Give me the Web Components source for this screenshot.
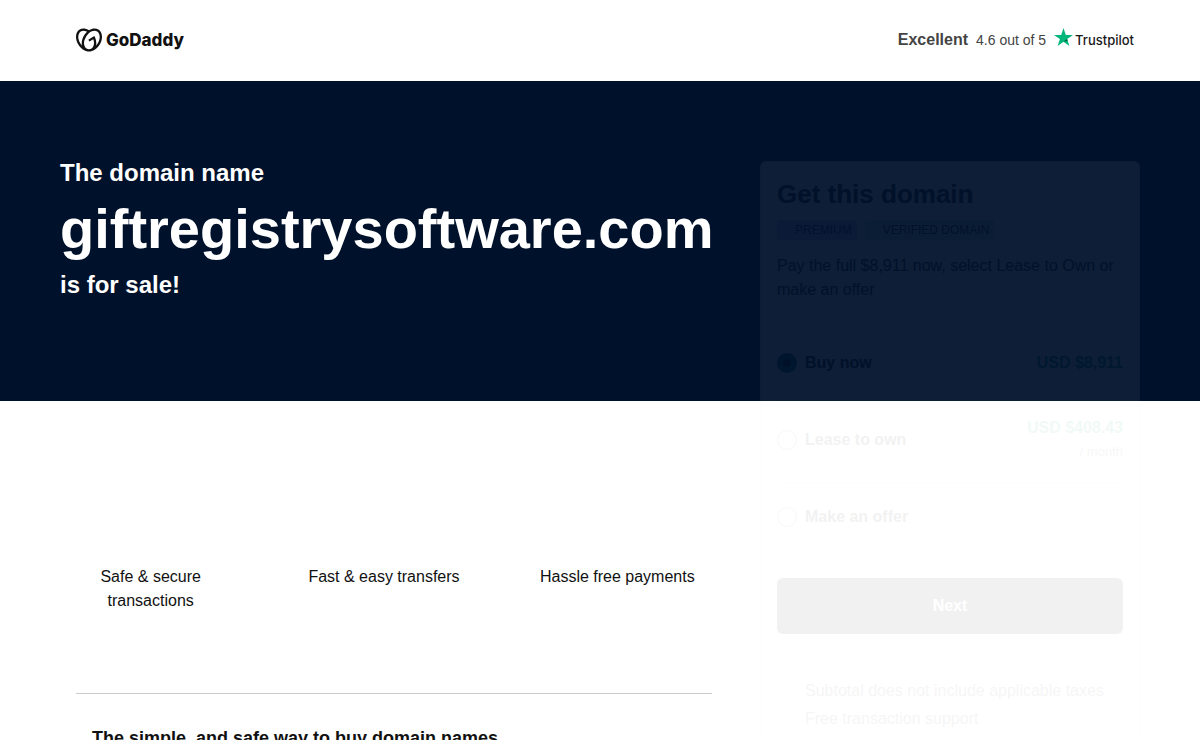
<!DOCTYPE html>
<html lang="en">
<head>
<meta charset="utf-8">
<meta name="viewport" content="width=device-width, initial-scale=1">
<title>giftregistrysoftware.com is for sale</title>
<style>
body {
    margin: 0;
    background: #fff;
    color: #111;
    font: 16px/24px "Liberation Sans", Arial, sans-serif;
}
</style>
</head>
<body>
<site-header>
    <trust-rating slot="rating" score="4.6"></trust-rating>
</site-header>
<landing-layout>
    <domain-hero slot="hero" domain="giftregistrysoftware.com"></domain-hero>
    <buy-card slot="card">
        <domain-badge slot="badges" kind="premium">PREMIUM</domain-badge>
        <domain-badge slot="badges" kind="verified">VERIFIED DOMAIN</domain-badge>
        <span slot="text">Pay the full $8,911 now, select Lease to Own or make an offer</span>
        <buy-options slot="options"></buy-options>
        <span slot="notes">Subtotal does not include applicable taxes</span>
        <span slot="notes">Free transaction support</span>
    </buy-card>
    <feature-list>
        <span>Safe &amp; secure transactions</span>
        <span>Fast &amp; easy transfers</span>
        <span>Hassle free payments</span>
    </feature-list>
    <info-section heading="The simple, and safe way to buy domain names"></info-section>
</landing-layout>

<script>
function define(name, html, setup) {
    const template = document.createElement("template")
    template.innerHTML = html

    window.customElements.define(name, class extends HTMLElement {
        constructor() {
            super();
            this.attachShadow({mode: 'open'})
            this.shadowRoot.appendChild(template.content.cloneNode(true))
        }

        connectedCallback() {
            if (setup) setup(this, this.shadowRoot)
        }
    })
}

define("site-header", `
<style>
:host {
    display: block;
}
header {
    display: flex;
    align-items: center;
    justify-content: space-between;
    min-height: 81px;
    padding: 0 66px 2px 76px;
    box-sizing: border-box;
}
a {
    display: flex;
    align-items: center;
    gap: 4px;
    color: #111;
    font: 800 17px/24px Inter, sans-serif;
    text-decoration: none;
}
svg {
    width: 26px;
    height: 26px;
}
</style>
<header>
    <a href="#">
        <svg viewBox="0 0 24 24" fill="currentColor" aria-hidden="true"><path d="M20.702 2.29c-2.494-1.554-5.778-1.187-8.706.654C9.076 1.104 5.79.736 3.3 2.29c-3.941 2.463-4.42 8.806-1.07 14.167 2.47 3.954 6.333 6.269 9.77 6.226 3.439.043 7.301-2.273 9.771-6.226 3.347-5.361 2.872-11.704-1.069-14.167zM4.042 15.328a12.838 12.838 0 0 1-1.546-3.541 10.12 10.12 0 0 1-.336-3.338c.15-1.98.956-3.524 2.27-4.345 1.315-.822 3.052-.87 4.903-.137.281.113.556.24.825.382A15.11 15.11 0 0 0 7.5 7.54c-2.035 3.255-2.655 6.878-1.945 9.765a13.247 13.247 0 0 1-1.514-1.98zm17.465-3.541a12.866 12.866 0 0 1-1.547 3.54 13.25 13.25 0 0 1-1.513 1.984c.635-2.589.203-5.76-1.353-8.734a.39.39 0 0 0-.563-.153l-4.852 3.032a.397.397 0 0 0-.126.546l.712 1.139a.395.395 0 0 0 .547.126l3.145-1.965c.101.306.203.606.28.916.296 1.086.41 2.214.335 3.337-.15 1.982-.956 3.525-2.27 4.347a4.437 4.437 0 0 1-2.25.65h-.101a4.432 4.432 0 0 1-2.25-.65c-1.314-.822-2.121-2.365-2.27-4.347-.074-1.123.039-2.251.335-3.337a13.212 13.212 0 0 1 4.05-6.482 10.148 10.148 0 0 1 2.849-1.765c1.845-.733 3.586-.685 4.9.137 1.316.822 2.122 2.365 2.271 4.345a10.146 10.146 0 0 1-.333 3.334z"/></svg>
        <span>GoDaddy</span>
    </a>
    <slot name="rating"></slot>
</header>
`)

define("trust-rating", `
<style>
:host {
    display: flex;
    align-items: center;
    gap: 8px;
    color: #444;
    font-size: 14px;
}
b {
    font-size: 16px;
}
a {
    display: flex;
    align-items: center;
    gap: 2px;
    color: #191919;
    font: 500 13px/24px Inter, sans-serif;
    text-decoration: none;
}
svg {
    width: 19px;
    height: 18px;
    margin-bottom: 6px;
}
</style>
<b>Excellent</b>
<span id="score"></span>
<a href="#">
    <svg viewBox="0 0 19 18" aria-hidden="true">
        <path fill="#00b67a" d="M19 6.9h-7.2L9.5 0 7.2 6.9H0l5.9 4.2L3.6 18l5.9-4.3 5.9 4.3-2.3-6.9z"/>
        <path fill="#005128" d="M13.6 12.7l-.5-1.6-3.6 2.6z"/>
    </svg>
    <span>Trustpilot</span>
</a>
`, (el, root) => {
    root.querySelector("#score").textContent = el.getAttribute("score") + " out of 5"
})

// The dark band fills the first row, the card hangs over both rows
define("landing-layout", `
<style>
:host {
    display: block;
}
main {
    display: grid;
    grid-template-columns: 60px minmax(0, 1fr) 380px 60px;
    grid-template-rows: 320px auto;
}
.band {
    grid-area: 1 / 1 / 2 / 5;
    background: #00112b;
}
.hero {
    grid-area: 1 / 2 / 2 / 3;
}
.content {
    grid-area: 2 / 2 / 3 / 3;
    padding-right: 32px;
}
.card {
    grid-area: 1 / 3 / 3 / 4;
    padding-top: 80px;
}
</style>
<main>
    <div class="band"></div>
    <div class="hero"><slot name="hero"></slot></div>
    <div class="content"><slot></slot></div>
    <div class="card"><slot name="card"></slot></div>
</main>
`)

define("domain-hero", `
<style>
:host {
    display: block;
    padding-top: 74px;
    color: #fff;
}
h1 {
    margin: 0;
    font-size: 24px;
    line-height: 36px;
}
span {
    display: block;
}
#domain {
    font-size: 56px;
    line-height: 76px;
}
</style>
<h1>
    <span>The domain name</span>
    <span id="domain"></span>
    <span>is for sale!</span>
</h1>
`, (el, root) => {
    root.querySelector("#domain").textContent = el.getAttribute("domain")
})

define("buy-card", `
<style>
:host {
    display: block;
    padding: 16px;
    border: 1px solid #d4dbe0;
    border-radius: 6px;
    background: #fff;
    color: #111;
    opacity: 0.05;
}
h2 {
    margin: 0;
    font-size: 26px;
    line-height: 32px;
}
.badges {
    display: flex;
    gap: 8px;
    margin: 10px 0 14px;
}
p {
    margin: 0 0 22px;
}
button {
    display: block;
    width: 100%;
    height: 56px;
    margin: 27px 0 43px;
    border: none;
    border-radius: 6px;
    background: #111;
    color: #fff;
    font: bold 16px/24px "Liberation Sans", Arial, sans-serif;
}
.notes {
    display: flex;
    flex-direction: column;
    padding-left: 28px;
    color: #555;
    line-height: 28px;
}
</style>
<h2>Get this domain</h2>
<div class="badges"><slot name="badges"></slot></div>
<p><slot name="text"></slot></p>
<slot name="options"></slot>
<button type="button">Next</button>
<div class="notes"><slot name="notes"></slot></div>
`)

define("domain-badge", `
<style>
:host {
    padding: 0 5px 0 18px;
    border-radius: 2px;
    background: #d8effd;
    font-size: 12px;
    line-height: 20px;
}
:host([kind="premium"]) {
    background: #d3c1f7;
    color: #2f1c6a;
}
:host([kind="verified"]) {
    background: #c9f5ee;
}
</style>
<slot></slot>
`)

define("buy-options", `
<style>
:host {
    display: block;
}
label {
    display: flex;
    align-items: center;
    gap: 8px;
    padding: 27px 0 26px;
    font-weight: bold;
}
label + label {
    border-top: 1px solid #d4dbe0;
}
label.lease {
    padding: 14px 0 18px;
}
label.offer {
    padding: 22px 0;
}
input {
    appearance: none;
    width: 20px;
    height: 20px;
    margin: 0;
    border: 1px solid #767676;
    border-radius: 50%;
    background: #fff;
}
input:checked {
    border: 6px solid #09757a;
    background: #000;
}
.price {
    margin-left: auto;
    color: #00a37a;
    text-align: right;
}
small {
    display: block;
    color: #767676;
    font-size: 13px;
    font-weight: normal;
}
</style>
<label>
    <input type="radio" name="option" checked>
    <span>Buy now</span>
    <span class="price">USD $8,911</span>
</label>
<label class="lease">
    <input type="radio" name="option">
    <span>Lease to own</span>
    <span class="price">USD $408.43<small>/ month</small></span>
</label>
<label class="offer">
    <input type="radio" name="option">
    <span>Make an offer</span>
</label>
`)

define("feature-list", `
<style>
:host {
    display: grid;
    grid-template-columns: repeat(3, minmax(0, 1fr));
    gap: 52px;
    padding: 164px 20px 80px 0;
    text-align: center;
}
</style>
<slot></slot>
`)

define("info-section", `
<style>
:host {
    display: block;
    padding: 0 16px 80px;
}
h2 {
    margin: 0;
    padding: 32px 16px 0;
    border-top: 1px solid #ccc;
    font-size: 18px;
    line-height: 24px;
}
</style>
<h2></h2>
`, (el, root) => {
    root.querySelector("h2").textContent = el.getAttribute("heading")
})
</script>
</body>
</html>
